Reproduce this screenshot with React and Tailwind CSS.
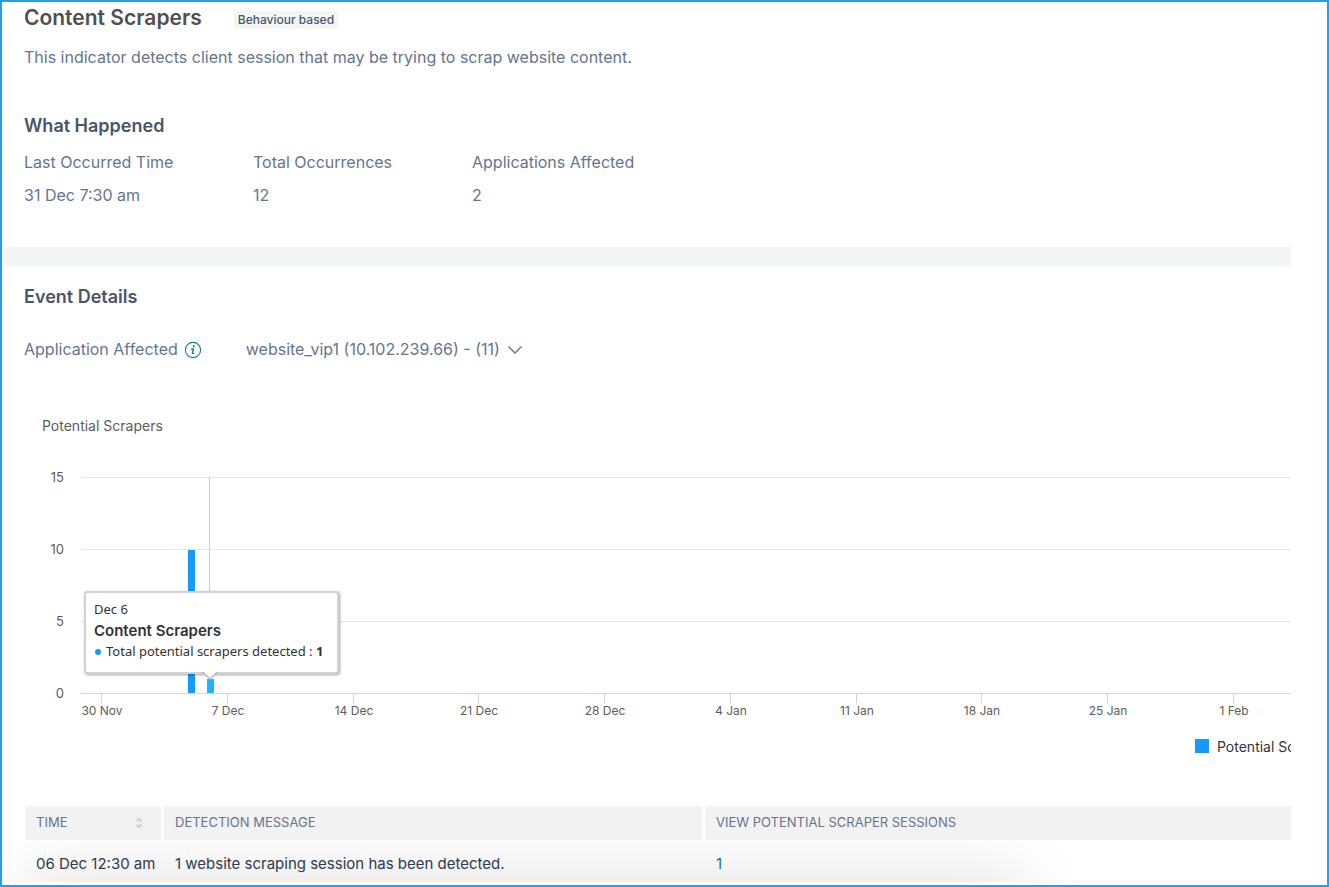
import React, { useState } from "react";

const SUMMARY = [
  { label: "Last Occurred Time", value: "31 Dec 7:30 am", width: "w-[229px]" },
  { label: "Total Occurrences", value: "12", width: "w-[219px]" },
  { label: "Applications Affected", value: "2", width: "w-[200px]" },
];

const WEEKS = ["30 Nov", "7 Dec", "14 Dec", "21 Dec", "28 Dec", "4 Jan", "11 Jan", "18 Jan", "25 Jan", "1 Feb"];
const LEVELS = [15, 10, 5, 0];

const BASE = 293;
const UNIT = 14.4;
const levelY = (value) => Math.round(BASE - value * UNIT);
const weekX = (index) => Math.round(77 + index * 125.75);

function InfoIcon() {
  return (
    <svg width="18" height="18" viewBox="0 0 18 18" fill="none" stroke="#0f7f8f">
      <circle cx="9" cy="9" r="7.6" strokeWidth="1.1" />
      <circle cx="9.9" cy="5.3" r="1.1" fill="#0f7f8f" stroke="none" />
      <path d="M7.600 8h1.900L8.300 12.400h1.400" strokeWidth="1.4" strokeLinecap="round" strokeLinejoin="round" />
    </svg>
  );
}

function Summary() {
  return (
    <section className="pl-[22px] pb-10">
      <div className="flex items-center gap-8">
        <h1 className="text-[21px] leading-[31px] font-semibold text-[#505050]">Content Scrapers</h1>
        <span className="mt-1 rounded bg-[#f4f5f7] px-1 text-xs leading-[18px] font-medium text-[#4b566c]">Behaviour based</span>
      </div>
      <p className="mt-3 text-base">This indicator detects client session that may be trying to scrap website content.</p>
      <h2 className="mt-[43px] text-lg leading-7 font-semibold text-[#4a5468]">What Happened</h2>
      <dl className="mt-[10px] flex text-base">
        {SUMMARY.map((item) => (
          <div key={item.label} className={item.width}>
            <dt>{item.label}</dt>
            <dd className="mt-[9px]">{item.value}</dd>
          </div>
        ))}
      </dl>
    </section>
  );
}

function ApplicationPicker() {
  const [app, setApp] = useState("vip1");
  return (
    <div className="mt-[26px] flex items-center text-base">
      <label htmlFor="application">Application Affected</label>
      <button type="button" aria-label="About affected applications" className="ml-[6px] mt-px">
        <InfoIcon />
      </button>
      <div className="relative ml-11">
        <select
          id="application"
          value={app}
          onChange={(e) => setApp(e.target.value)}
          className="h-6 w-[280px] appearance-none bg-transparent"
        >
          <option value="vip1">website_vip1 (10.102.239.66) - (11)</option>
        </select>
        <svg className="pointer-events-none absolute right-[3px] top-2" width="16" height="10" viewBox="0 0 16 10" fill="none" stroke="#65758f" strokeWidth="1.4">
          <path d="M1.5 1.5 8 8l6.500-6.500" />
        </svg>
      </div>
    </div>
  );
}

function Tooltip() {
  return (
    <div className="absolute left-[60px] top-[191px] w-[255px] rounded-[3px] border-2 border-[#d2d2d2] bg-white px-2 pt-[6px] pb-[10px] font-['Noto_Sans',sans-serif] text-[13px] leading-[21px] text-[#333333] shadow-[1px_1px_3px_rgba(0,0,0,0.35)]">
      <div>Dec 6</div>
      <div className="font-['Inter',sans-serif] text-[15px] leading-[21px] font-semibold">Content Scrapers</div>
      <div className="flex items-center whitespace-nowrap">
        <span className="mr-[5px] ml-px size-[6px] rounded-full bg-[#1499ff]" />
        Total potential scrapers detected :&nbsp;<b>1</b>
      </div>
      <svg className="absolute left-[116px] top-full" width="16" height="9" viewBox="0 0 16 9">
        <path d="M0 0 8 7l8-7z" fill="#fff" />
        <path d="M0 .8h1.500L8 7l6.500-6.200H16" fill="none" stroke="#bdbdbd" strokeWidth="1.600" />
      </svg>
    </div>
  );
}

function Chart() {
  return (
    <div className="relative mt-[39px]">
      <svg className="block h-[380px] w-full text-xs" fill="#5c5c5c" role="img" aria-label="Potential scrapers per day">
        <text x="18" y="31" className="text-sm">Potential Scrapers</text>
        {LEVELS.map((level) => (
          <g key={level}>
            <text x="40" y={levelY(level) + 5} textAnchor="end" className="text-[13px]">{level}</text>
            <rect x="57" y={levelY(level)} width="100%" height="1" fill={level === 0 ? "#ccd6eb" : "#e6e6e6"} />
          </g>
        ))}
        {WEEKS.map((week, i) => (
          <g key={week}>
            <rect x={weekX(i)} y={BASE} width="1" height="10" fill="#ccd6eb" />
            <text x={weekX(i) + 1} y="315" textAnchor="middle">{week}</text>
          </g>
        ))}
        <rect x="185" y="77" width="1" height="216" fill="#cccccc" />
        <rect x="164" y={levelY(10) + 1} width="7" height={BASE - levelY(10) - 1} fill="#1499ff" />
        <rect x="183" y={levelY(1)} width="7" height={BASE - levelY(1)} fill="#22b1ff" />
        <rect x="1171" y="339" width="14" height="14" fill="#1499ff" />
        <text x="1193" y="352" fill="#333333" className="text-sm">Potential Scrapers</text>
      </svg>
      <Tooltip />
    </div>
  );
}

function SortIcon() {
  return (
    <svg width="8" height="12" viewBox="0 0 8 12" fill="#d4d6db">
      <path d="M4 0 8 4.500H0zM4 12 0 7.500h8z" />
    </svg>
  );
}

function EventTable() {
  const head = "h-[34px] border-r-[3px] border-white bg-[#f2f2f2] px-[11px] text-left text-[13px] font-normal text-[#65758f]";
  return (
    <table className="mt-[26px] w-full table-fixed border-separate border-spacing-0 text-[15px] text-[#333d4f]">
      <thead>
        <tr>
          <th className={`${head} w-[139px]`}>
            <button type="button" className="flex w-full items-center justify-between pr-[7px]">
              TIME
              <SortIcon />
            </button>
          </th>
          <th className={`${head} w-[541px]`}>DETECTION MESSAGE</th>
          <th className="h-[34px] bg-[#f2f2f2] px-[11px] text-left text-[13px] font-normal text-[#65758f]">
            VIEW POTENTIAL SCRAPER SESSIONS
          </th>
        </tr>
      </thead>
      <tbody>
        <tr className="h-[42px] whitespace-nowrap">
          <td className="px-[11px] pt-[6px]">06 Dec 12:30 am</td>
          <td className="px-[11px] pt-[6px]">1 website scraping session has been detected.</td>
          <td className="px-[11px] pt-[6px]">
            <a href="#sessions" className="text-[#0f7f8f]">1</a>
          </td>
        </tr>
      </tbody>
    </table>
  );
}

export default function App() {
  return (
    <main className="min-h-screen border-2 border-[#219ff5] bg-white pb-[3px] pr-9 font-['Inter',sans-serif] text-[#65758f]">
      <Summary />
      <div className="ml-[2px] h-[19px] bg-[#f4f5f7]" />
      <section className="pl-[22px] pt-[17px]">
        <h2 className="text-lg leading-7 font-semibold text-[#4a5468]">Event Details</h2>
        <ApplicationPicker />
        <Chart />
      </section>
      <section className="relative pl-[23px]">
        <EventTable />
        {/* soft shade rising from below the last row */}
        <div className="pointer-events-none absolute bottom-0 left-[2px] h-[42px] w-[1070px] overflow-hidden">
          <div className="absolute top-full left-5 h-10 w-[1000px] shadow-[0_0_70px_rgba(0,0,0,0.16)]" />
        </div>
      </section>
    </main>
  );
}
